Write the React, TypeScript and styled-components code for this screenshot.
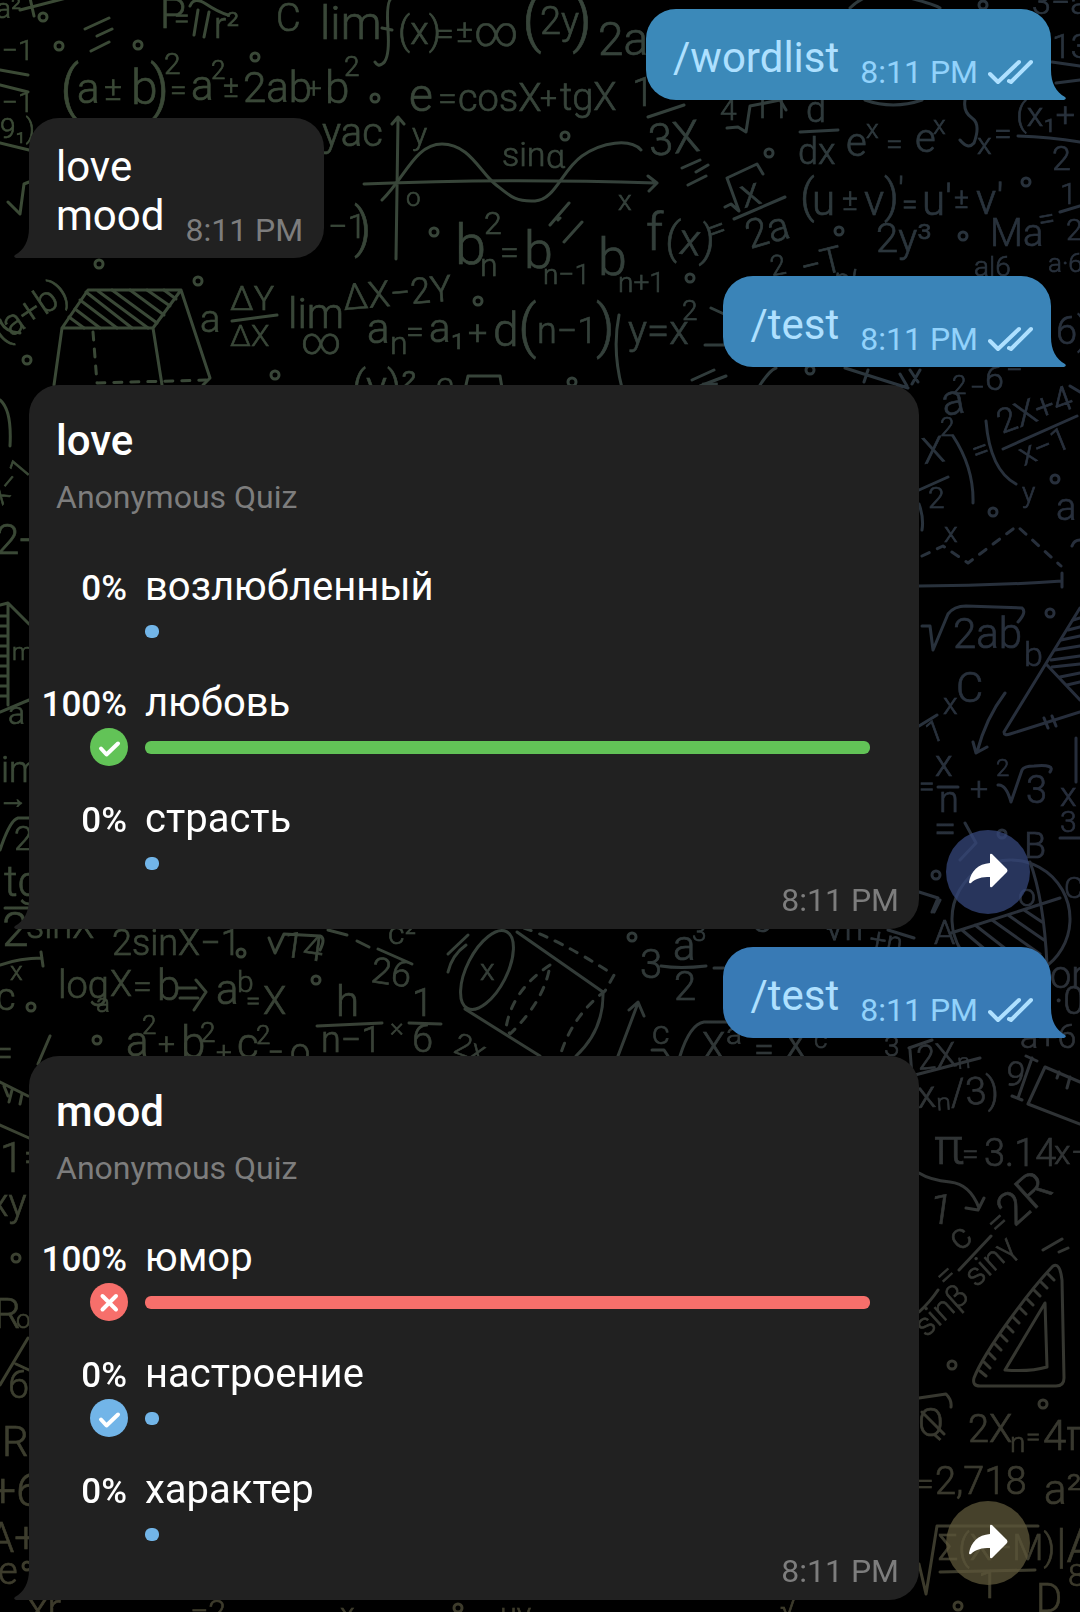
import React from "react";
import styled, { createGlobalStyle } from "styled-components";

const GlobalStyle = createGlobalStyle`
  *, *::before, *::after { box-sizing: border-box; }
  body {
    margin: 0;
    background: #000;
    color: #fff;
    font-family: Roboto, "Noto Sans", sans-serif;
  }
`;

/* ---------- wallpaper ---------- */

const WallpaperSvg = styled.svg`
  position: fixed;
  inset: 0;
  z-index: -1;
  width: 100%;
  height: 100%;
  font-family: Roboto, "Noto Sans", sans-serif;
  font-weight: 300;
`;

type Glyphs = [x: number, y: number, size: number, text: string, rotate?: number];

const formulas: Glyphs[] = [
  [-4, 18, 28, "a²"], [160, 28, 42, "P"], [174, 28, 28, "="], [214, 38, 36, "r²"],
  [276, 31, 38, "C"], [320, 39, 46, "lim"], [398, 44, 38, "(x)"], [436, 44, 32, "="], [456, 42, 32, "±"], [474, 46, 42, "∞"],
  [522, 40, 62, "("], [540, 34, 38, "2y"], [572, 40, 62, ")"], [598, 55, 46, "2a"],
  [2, 60, 28, "−1"], [2, 112, 28, "−1"], [0, 138, 28, "9₁)"],
  [60, 108, 60, "("], [77, 103, 42, "a"], [104, 100, 34, "±"], [131, 104, 48, "b"], [150, 108, 60, ")"], [164, 74, 30, "2"],
  [170, 100, 30, "="], [191, 100, 42, "a"], [211, 79, 26, "2"], [223, 97, 30, "±"], [243, 102, 42, "2ab"], [306, 98, 28, "+"], [325, 103, 44, "b"], [344, 76, 28, "2"],
  [409, 111, 46, "e"], [438, 110, 34, "="], [458, 111, 38, "cosX"], [540, 108, 30, "+"], [560, 110, 38, "tgX"],
  [322, 146, 40, "yac"], [412, 145, 32, "y"], [406, 206, 26, "o"], [502, 166, 34, "sin"], [546, 168, 34, "α"], [618, 210, 28, "x"],
  [328, 238, 34, "−1"], [354, 246, 54, ")"],
  [455, 264, 56, "b"], [480, 276, 32, "n"], [484, 234, 32, "2"], [500, 264, 34, "="], [524, 268, 52, "b"], [543, 284, 28, "n−1"], [598, 275, 52, "b"], [618, 292, 28, "n+1"],
  [632, 106, 40, "1"], [650, 156, 44, "3X", -6], [720, 120, 30, "4"], [752, 118, 34, "11"],
  [806, 122, 36, "d"], [798, 164, 36, "dx"], [846, 156, 40, "e"], [866, 138, 26, "x"], [886, 154, 30, "="], [915, 152, 40, "e"], [933, 134, 26, "x"],
  [977, 154, 30, "x"], [994, 144, 32, "="], [1016, 126, 34, "(x₁+"], [1052, 170, 34, "2"], [1052, 58, 34, "13"], [1032, 14, 34, "3−a"],
  [744, 208, 40, "x", -15], [750, 249, 40, "2a", -16], [646, 250, 52, "f"], [664, 252, 44, "(x)", 6], [712, 242, 32, "=", -20],
  [800, 212, 46, "("], [812, 215, 42, "u"], [842, 210, 30, "±"], [864, 215, 42, "v"], [884, 212, 46, ")"], [898, 204, 36, "'"], [902, 214, 28, "="], [922, 215, 42, "u'"], [954, 208, 28, "±"], [976, 214, 42, "v'"],
  [990, 246, 38, "Ma"], [1040, 230, 30, "=", -10], [1060, 204, 30, "1"], [1066, 240, 30, "2"],
  [876, 252, 40, "2y³"], [772, 276, 28, "2", -10], [804, 280, 36, "−T", -14], [832, 288, 30, "nk", 10], [974, 276, 28, "a|6"], [1048, 272, 26, "a·6"], [1056, 344, 38, "6)"],
  [2, 344, 36, "(a+b)", -34], [200, 332, 38, "a"], [230, 310, 34, "ΔY"], [230, 346, 30, "ΔX"], [288, 328, 42, "lim"], [301, 354, 38, "∞"], [344, 310, 36, "ΔX−2Y", -5],
  [367, 343, 42, "a"], [390, 354, 32, "n"], [406, 342, 32, "="], [429, 342, 40, "a₁"], [468, 344, 34, "+"], [493, 346, 46, "d"], [518, 346, 58, "("], [537, 343, 36, "n−1"], [596, 346, 58, ")"],
  [628, 344, 40, "y=x"], [682, 320, 28, "2"],
  [352, 402, 44, "(y)²"], [436, 402, 34, "2"], [700, 400, 36, "="],
  [944, 416, 42, "a", -10], [952, 394, 26, "2"], [970, 396, 26, "−"], [985, 390, 34, "6"], [1006, 376, 30, "="],
  [924, 464, 36, "X", -8], [940, 436, 26, "2"], [928, 508, 30, "2"], [976, 462, 30, "=", -20], [1002, 434, 34, "2X+4", -20], [1024, 466, 32, "x−1", -22],
  [1022, 502, 28, "y"], [944, 542, 28, "x"], [1056, 520, 38, "a"], [953, 648, 42, "2ab"], [1024, 666, 34, "b"],
  [956, 702, 42, "C"], [943, 714, 30, "x"], [930, 744, 30, "1", -20], [935, 776, 36, "x"], [939, 812, 36, "n"], [919, 796, 28, "="], [970, 800, 32, "+"], [996, 776, 24, "2"], [1026, 803, 38, "3"],
  [1060, 806, 34, "x"], [1060, 832, 30, "3"], [934, 842, 40, "="], [1024, 858, 36, "B"], [934, 944, 34, "A"], [1064, 898, 30, "C"], [1018, 906, 32, "o"],
  [2, 506, 30, "x−1", -50], [-4, 554, 42, "2+"], [12, 660, 24, "ma"], [8, 724, 32, "a"], [1, 782, 36, "im"], [-2, 808, 30, "→1"], [14, 850, 34, "2"], [4, 896, 42, "tg"],
  [2, 946, 48, "2"], [26, 938, 36, "sinX"], [112, 955, 36, "2sinX−1"], [282, 956, 36, "14", 8], [388, 944, 32, "c²"], [370, 982, 36, "26", 8],
  [10, 980, 26, "x"], [-4, 1010, 38, "c"], [58, 998, 38, "log"], [96, 1012, 26, "a"], [110, 996, 36, "X"], [133, 998, 34, "="], [157, 1000, 42, "b"], [216, 1004, 42, "a"], [237, 992, 30, "b"], [246, 1010, 26, "="], [263, 1014, 38, "X"],
  [126, 1056, 42, "a"], [142, 1034, 26, "2"], [158, 1054, 30, "+"], [181, 1058, 44, "b"], [200, 1042, 28, "2"], [216, 1062, 28, "+"], [237, 1058, 42, "c"], [256, 1044, 26, "2"], [268, 1064, 28, "="], [290, 1064, 36, "o"],
  [-8, 1066, 38, "="], [336, 1016, 42, "h"], [321, 1052, 36, "n−1"], [390, 1036, 26, "×"], [412, 1016, 38, "1"], [412, 1052, 38, "6"], [452, 1052, 30, "2x", 20], [480, 980, 30, "x"],
  [640, 978, 40, "3"], [673, 960, 42, "a"], [692, 941, 26, "3"], [674, 1000, 40, "2"], [652, 1044, 34, "c"], [702, 1060, 38, "X"], [726, 1044, 30, "a"], [754, 1062, 36, "="], [784, 1060, 38, "X"], [814, 1048, 26, "c"],
  [752, 932, 38, "c="], [826, 940, 34, "√n"], [868, 948, 30, "+n", 10], [1050, 988, 38, "or"], [1054, 1014, 38, "·0"], [1020, 1048, 34, "a+6"],
  [884, 1056, 28, "3"], [918, 1070, 34, "2Xₙ", -6], [918, 1108, 38, "xₙ/3)", -4], [934, 1164, 50, "π"], [962, 1164, 30, "="], [984, 1166, 38, "3.14"], [1054, 1164, 34, "x−"], [1004, 1084, 34, "9", 10],
  [928, 1222, 42, "1", 8], [960, 1252, 36, "c", -40], [976, 1288, 32, "sinγ", -42], [998, 1236, 32, "=", -42], [1014, 1228, 46, "2R", -42], [926, 1338, 32, "sinβ", -42], [946, 1288, 30, "=", -42],
  [918, 1436, 38, "Q"], [968, 1442, 38, "2X"], [1010, 1452, 28, "n"], [1026, 1446, 26, "="], [1043, 1450, 42, "4π"], [916, 1494, 32, "="], [935, 1494, 38, "2,718"], [1044, 1504, 42, "a²−"],
  [938, 1560, 36, "Σ(X−M)"], [978, 1598, 38, "1"], [1056, 1562, 48, "|A"], [1036, 1612, 40, "D"], [1068, 1586, 32, "8"],
  [0, 1172, 42, "1="], [-10, 1216, 38, "xy"], [-6, 1328, 42, "R"], [16, 1328, 26, "o"], [8, 1398, 38, "6"], [2, 1456, 42, "R"], [-10, 1506, 46, "+6"], [-12, 1552, 42, "A+"], [-2, 1584, 38, "e"],
  [28, 1622, 40, "xr"], [190, 1622, 32, "−2"], [340, 1624, 30, "x"], [500, 1624, 30, "ну"], [780, 1618, 30, "√"],
];

const circles: [number, number][] = [
  [43, 17], [59, 46], [138, 45], [255, 57], [375, 98], [99, 264], [198, 281], [27, 360], [275, 375], [478, 301], [434, 232],
  [565, 136], [769, 153], [839, 231], [963, 236], [1026, 182], [690, 278], [983, 5], [1055, 479], [993, 512], [1050, 613],
  [572, 382], [810, 370], [1002, 834], [936, 875], [241, 953], [316, 980], [31, 1007], [97, 1040], [632, 937], [16, 1258],
  [952, 1365], [1043, 1404], [958, 1606], [458, 1608], [27, 1566],
];

const strokes = [
  "M20 10 78 -5M30 -2 34 16M85 29 109 18M97 36 112 29M91 51 109 42",
  "M0 70 28 75M0 85 28 92M0 143 29 150M190 6Q194 -4 206 4T228 15M194 35 198 10M204 37 209 12",
  "M392 -2Q386 0 388 30T382 64Q378 67 375 62M382 28 392 30",
  "M396 259 398 120M392 124 398 117 404 124M364 184Q500 178 656 183M648 176 657 183 649 191",
  "M382 200C405 178 415 144 442 144S480 172 495 184 515 202 535 201 562 170 582 156 630 138 641 150",
  "M8 202 20 214 24 184 29 182M550 225 569 203M564 242 582 222M558 220 560 218",
  "M648 117 684 105M727 128 738 127 746 132 750 106 780 100 786 110M800 132 838 130M682 168 700 160M696 172 708 165M688 185 706 176",
  "M725 207 731 204 739 211 727 178 757 164 763 174M734 219 785 197M1018 136Q1050 137 1080 142M1052 62 1080 66M1056 83 1080 80",
  "M965 100Q963 112 972 118T974 143Q968 150 960 140M865 100Q893 110 922 100M1060 212 1080 206",
  "M850 8Q870 -12 902 -4T940 8M711 308 724 314M705 345 724 345M692 380 714 370M700 386 726 376",
  "M88 290H181L153 328H62ZM62 328 54 385M153 328 162 385M181 290 210 378 203 385",
  "M86 292 132 328M98 291 148 328M112 290 157 323M130 290 164 315M147 290 170 306M164 290 176 299M80 300 117 328M75 309 100 328M69 317 84 328",
  "M619 315Q612 350 622 388M232 321 277 315M466 385 468 376 500 376 502 388M0 320Q4 332 20 333M772 310 780 300",
  "M845 368 908 388M900 374 907 386 896 388M868 370 864 382M910 370 918 382M920 370 912 384M760 385Q770 370 776 368",
  "M919 490 948 477M953 436Q974 468 973 503M986 421Q990 470 1016 484M1003 449 1077 416M919 504Q924 518 922 530M919 586Q990 586 1062 581M1062 573V587",
  "M1080 392 1070 386M1080 540Q1074 540 1072 546",
  "M922 626H930L933 650 948 614Q954 606 966 606L1022 608Q1027 612 1018 622M1080 608 1004 732Q1004 736 1010 734L1080 712M1047 665 1080 700",
  "M1073 620 1080 618M1068 630 1080 627M1061 640 1080 636M1055 650 1080 646M1051 660 1080 656M1052 667 1080 664M1060 677 1080 673M1067 685 1080 682",
  "M1044 718 1048 728M1052 716 1056 726M1005 693Q986 718 977 752M973 742 976 753 987 747M919 726 937 715M938 787H958M998 785Q1006 784 1011 802L1022 770Q1024 766 1034 766 1056 764 1050 772M1076 738V782",
  "M965 823 976 843 960 860M919 892 938 898 932 912M1060 838H1080",
  "M1010 860A59 59 0 1 0 1012 860M951 933 1060 898M1030 862Q1044 900 1047 965M962 930 1000 962M975 925 1020 960M992 920 1040 954M1008 915 1044 940M1024 910 1042 922",
  "M0 605 8 603 29 624M8 603V705M0 712 29 700M0 616H8M0 626H8M0 636H8M0 646H8M0 656H8M0 666H8M0 676H8M0 686H8M0 696H8",
  "M0 850Q10 820 18 818H29M0 400Q12 410 10 446M5 908H28M0 965Q20 958 42 958M41 952 43 966",
  "M269 938 275 953 284 934 320 936Q326 938 320 950M328 930 347 935M357 941 369 947M378 949 412 964M448 954 468 935M448 972Q452 955 466 945",
  "M178 988 196 988M180 998 198 998M196 980 206 992 194 1010M317 1026 382 1023M409 1023 441 1024M38 1064 50 1036M0 1082 28 1096M4 1086 8 1096M12 1090 9 1102M22 1094 20 1104M0 1125 29 1138",
  "M465 1009 540 1056M517 932 603 992Q604 1030 576 1056M618 1056 638 1003M629 1010 638 1002 644 1016M661 966Q680 969 706 966M714 968H724M652 1050H664L668 1056",
  "M680 1056Q690 1024 704 1022H730M910 1050 912 1076M909 1048 932 1040M915 1075 980 1058M888 930 914 938M934 912 940 900",
  "M1080 1082 1045 1067 1028 1104 1080 1124M1059 1072 1057 1078M1070 1077 1067 1088M1026 1056 1037 1061M1032 1058 1018 1098M1012 1096 1022 1100",
  "M919 1173Q930 1180 950 1182T979 1208M966 1208 978 1210 984 1198M959 1270 991 1236M919 1312Q930 1302 938 1290M1043 1250 1062 1239M1059 1252 1068 1248",
  "M974 1378C985 1350 1030 1290 1053 1266Q1060 1262 1062 1280L1064 1378Q1064 1386 1056 1386H980Q972 1386 974 1378ZM1045 1303 1005 1370Q1030 1372 1047 1367Z",
  "M1048 1274 1054 1280M1041 1282 1047 1288M1034 1290 1040 1296M1027 1299 1033 1305M1020 1308 1026 1314M1013 1317 1019 1323M1007 1326 1013 1332M1001 1335 1007 1341M995 1344 1001 1350M989 1353 995 1359M984 1362 990 1368M980 1371 986 1376",
  "M919 1398 946 1394Q952 1400 951 1407M922 1412 944 1434M919 1564 926 1594 937 1526H1038M940 1572 1035 1570M0 1385 28 1338M16 1364 29 1370",
];

const dashes = [
  "M93 332 97 383 206 380",
  "M922 556 943 546 968 563 1017 526 1061 566",
  "M524 928Q560 940 614 975L605 991Q572 1016 560 1056",
  "M550 965Q512 990 506 1028L510 1034Q545 1000 550 965",
];

const Wallpaper = () => (
  <WallpaperSvg viewBox="0 0 1080 1612" preserveAspectRatio="xMidYMin slice" aria-hidden="true">
    <defs>
      <linearGradient id="ink" x1="0" y1="0.1" x2="1" y2="0.45">
        <stop offset="0" stopColor="#3b4a35" />
        <stop offset="0.45" stopColor="#37443a" />
        <stop offset="0.8" stopColor="#29333c" />
        <stop offset="1" stopColor="#262d3b" />
      </linearGradient>
      <linearGradient id="warm" x1="0" y1="0" x2="0" y2="1">
        <stop offset="0.5" stopColor="#3d3c2c" stopOpacity="0" />
        <stop offset="1" stopColor="#3d3b2b" />
      </linearGradient>
      <mask id="doodles" maskUnits="userSpaceOnUse" x="0" y="0" width="1080" height="1612">
        <g fill="#fff" stroke="#fff" strokeWidth="0.6">
          {formulas.map(([x, y, size, text, rotate = 0], i) => (
            <text key={i} x={x} y={y} fontSize={size} transform={`rotate(${rotate} ${x} ${y})`}>
              {text}
            </text>
          ))}
        </g>
        <g fill="none" stroke="#fff" strokeWidth="3" strokeLinecap="round" strokeLinejoin="round">
          {circles.map(([cx, cy]) => (
            <circle key={`${cx}-${cy}`} cx={cx} cy={cy} r="4" />
          ))}
          {strokes.map((d) => <path key={d} d={d} />)}
          {dashes.map((d) => <path key={d} d={d} strokeDasharray="8 9" />)}
          <ellipse cx="487" cy="970" rx="20" ry="43" transform="rotate(27 487 970)" />
        </g>
      </mask>
    </defs>
    <g mask="url(#doodles)">
      <rect width="1080" height="1612" fill="url(#ink)" />
      <rect width="1080" height="1612" fill="url(#warm)" />
    </g>
  </WallpaperSvg>
);

/* ---------- messages ---------- */

const Chat = styled.main`
  display: flex;
  flex-direction: column;
  align-items: flex-start;
  gap: 18px;
  padding: 9px 29px 12px;
`;

const TailSvg = styled.svg<{ $out?: boolean }>`
  position: absolute;
  bottom: 0;
  ${({ $out }) => ($out ? "left: 100%; transform: scaleX(-1);" : "right: 100%;")}
  width: 15px;
  height: 30px;
`;

const Tail = ({ out, color }: { out?: boolean; color: string }) => (
  <TailSvg $out={out} viewBox="0 0 15 30" fill={color} aria-hidden="true">
    <path d="M15 0C15 13 10 22 1 27Q-1 29 2 30H15Z" />
  </TailSvg>
);

const Bubble = styled.article<{ $out?: boolean; $color: string }>`
  position: relative;
  display: flex;
  align-items: flex-end;
  gap: 21px;
  align-self: ${({ $out }) => ($out ? "flex-end" : "flex-start")};
  padding: 24px ${({ $out }) => ($out ? "18px" : "21px")} 10px 27px;
  border-radius: ${({ $out }) => ($out ? "30px 30px 0 30px" : "30px 30px 30px 0")};
  background: ${({ $color }) => $color};
`;

const MessageText = styled.p`
  margin: 0 0 8px;
  font-size: 42px;
  line-height: 49px;
  white-space: pre-line;
`;

const Command = styled.a`
  color: #aee0ff;
  text-decoration: none;
`;

const Meta = styled.span<{ $out?: boolean }>`
  display: flex;
  align-items: center;
  gap: 10px;
  color: ${({ $out }) => ($out ? "#92d2fb" : "#7d7d7d")};
  font-size: 32px;
  line-height: 36px;
  white-space: nowrap;
`;

const TicksSvg = styled.svg`
  width: 45px;
  height: 26px;
  stroke: #aee0ff;
`;

const Ticks = () => (
  <TicksSvg viewBox="0 0 45 26" fill="none" strokeWidth="4" strokeLinecap="round" strokeLinejoin="round" role="img" aria-label="Read">
    <path d="M2 15 10 23 31 3M21 22 23 23 43 3" />
  </TicksSvg>
);

const Outgoing = ({ command, color }: { command: string; color: string }) => (
  <Bubble $out $color={color}>
    <MessageText>
      <Command href={`#${command}`}>/{command}</Command>
    </MessageText>
    <Meta $out>
      <time>8:11 PM</time>
      <Ticks />
    </Meta>
    <Tail out color={color} />
  </Bubble>
);

/* ---------- quiz ---------- */

const CARD = "#212121";

const QuizRow = styled.div`
  display: flex;
  align-items: flex-end;
  gap: 27px;
  width: 100%;
`;

const QuizCard = styled.article`
  position: relative;
  flex: 0 1 890px;
  padding: 31px 0 11px;
  border-radius: 30px 30px 30px 0;
  background: ${CARD};
`;

const QuizHeader = styled.header`
  display: flex;
  flex-direction: column;
  gap: 14px;
  padding: 0 27px 49px;
`;

const Question = styled.h2`
  margin: 0;
  font-size: 42px;
  font-weight: 500;
  line-height: 49px;
`;

const Kind = styled.p`
  margin: 0;
  color: #7d7d7d;
  font-size: 32px;
  line-height: 36px;
`;

const Options = styled.ul`
  display: flex;
  flex-direction: column;
  gap: 30px;
  margin: 0;
  padding: 0 49px 0 0;
  list-style: none;
`;

const Option = styled.li`
  display: grid;
  grid-template-columns: 99px 1fr;
  grid-template-rows: 46px 38px;
  gap: 2px 17px;
  align-items: center;
`;

const Percent = styled.span`
  align-self: baseline;
  padding-right: 1px;
  font-size: 35px;
  font-weight: 500;
  line-height: 42px;
  text-align: right;
`;

const Answer = styled.span`
  align-self: baseline;
  font-size: 40px;
  line-height: 46px;
`;

const Badge = styled.span<{ $color: string }>`
  display: flex;
  align-items: center;
  justify-content: center;
  justify-self: end;
  width: 38px;
  height: 38px;
  border-radius: 50%;
  background: ${({ $color }) => $color};
`;

const Bar = styled.div<{ $color: string }>`
  grid-column: 2;
  min-width: 14px;
  height: 13px;
  border-radius: 6px;
  background: ${({ $color }) => $color};
`;

const Footer = styled.footer`
  display: flex;
  justify-content: flex-end;
  padding-right: 20px;
`;

const ShareButton = styled.button<{ $color: string }>`
  flex: none;
  width: 84px;
  height: 84px;
  margin-bottom: 15px;
  padding: 0;
  border: 0;
  border-radius: 50%;
  background: ${({ $color }) => $color};
`;

const GREEN = "#62c357";
const BLUE = "#72b5e8";
const RED = "#f76f6b";

const Mark = ({ wrong }: { wrong?: boolean }) => (
  <svg width="38" height="38" viewBox="0 0 38 38" fill="none" stroke="#fff" strokeWidth="4" strokeLinecap="round" strokeLinejoin="round" aria-hidden="true">
    <path d={wrong ? "M12.5 13 26 26.5M26 13 12.5 26.5" : "M11 20.5 16.5 26.5 28 15.5"} />
  </svg>
);

type QuizOption = { text: string; percent: number; color?: string; mark?: "right" | "wrong" };

type QuizProps = { word: string; options: QuizOption[]; shareColor: string };

const Quiz = ({ word, options, shareColor }: QuizProps) => (
  <QuizRow>
    <QuizCard>
      <QuizHeader>
        <Question>{word}</Question>
        <Kind>Anonymous Quiz</Kind>
      </QuizHeader>
      <Options>
        {options.map(({ text, percent, color = BLUE, mark }) => (
          <Option key={text}>
            <Percent>{percent}%</Percent>
            <Answer>{text}</Answer>
            {mark && (
              <Badge $color={color}>
                <Mark wrong={mark === "wrong"} />
              </Badge>
            )}
            <Bar
              $color={color}
              style={{ width: `${percent}%` }}
              role="progressbar"
              aria-label={text}
              aria-valuenow={percent}
            />
          </Option>
        ))}
      </Options>
      <Footer>
        <Meta>
          <time>8:11 PM</time>
        </Meta>
      </Footer>
      <Tail color={CARD} />
    </QuizCard>
    <ShareButton type="button" aria-label="Share" $color={shareColor}>
      <svg width="84" height="84" viewBox="0 0 84 84" fill="#fff" aria-hidden="true">
        <path d="M44 25Q44 23 46 24L61 39Q62 41 61 42L46 57Q44 58 44 56V47C36 47 30 48 25 53Q23 54 23 52C25 41 32 34 44 33Z" />
      </svg>
    </ShareButton>
  </QuizRow>
);

export default function App() {
  return (
    <>
      <GlobalStyle />
      <Wallpaper />
      <Chat>
        <Outgoing command="wordlist" color="#3b89b9" />
        <Bubble $color={CARD}>
          <MessageText>{"love\nmood"}</MessageText>
          <Meta>
            <time>8:11 PM</time>
          </Meta>
          <Tail color={CARD} />
        </Bubble>
        <Outgoing command="test" color="#3a84b8" />
        <Quiz
          word="love"
          shareColor="rgba(53, 71, 123, 0.75)"
          options={[
            { text: "возлюбленный", percent: 0 },
            { text: "любовь", percent: 100, color: GREEN, mark: "right" },
            { text: "страсть", percent: 0 },
          ]}
        />
        <Outgoing command="test" color="#387ab5" />
        <Quiz
          word="mood"
          shareColor="rgba(94, 87, 58, 0.75)"
          options={[
            { text: "юмор", percent: 100, color: RED, mark: "wrong" },
            { text: "настроение", percent: 0, mark: "right" },
            { text: "характер", percent: 0 },
          ]}
        />
      </Chat>
    </>
  );
}
